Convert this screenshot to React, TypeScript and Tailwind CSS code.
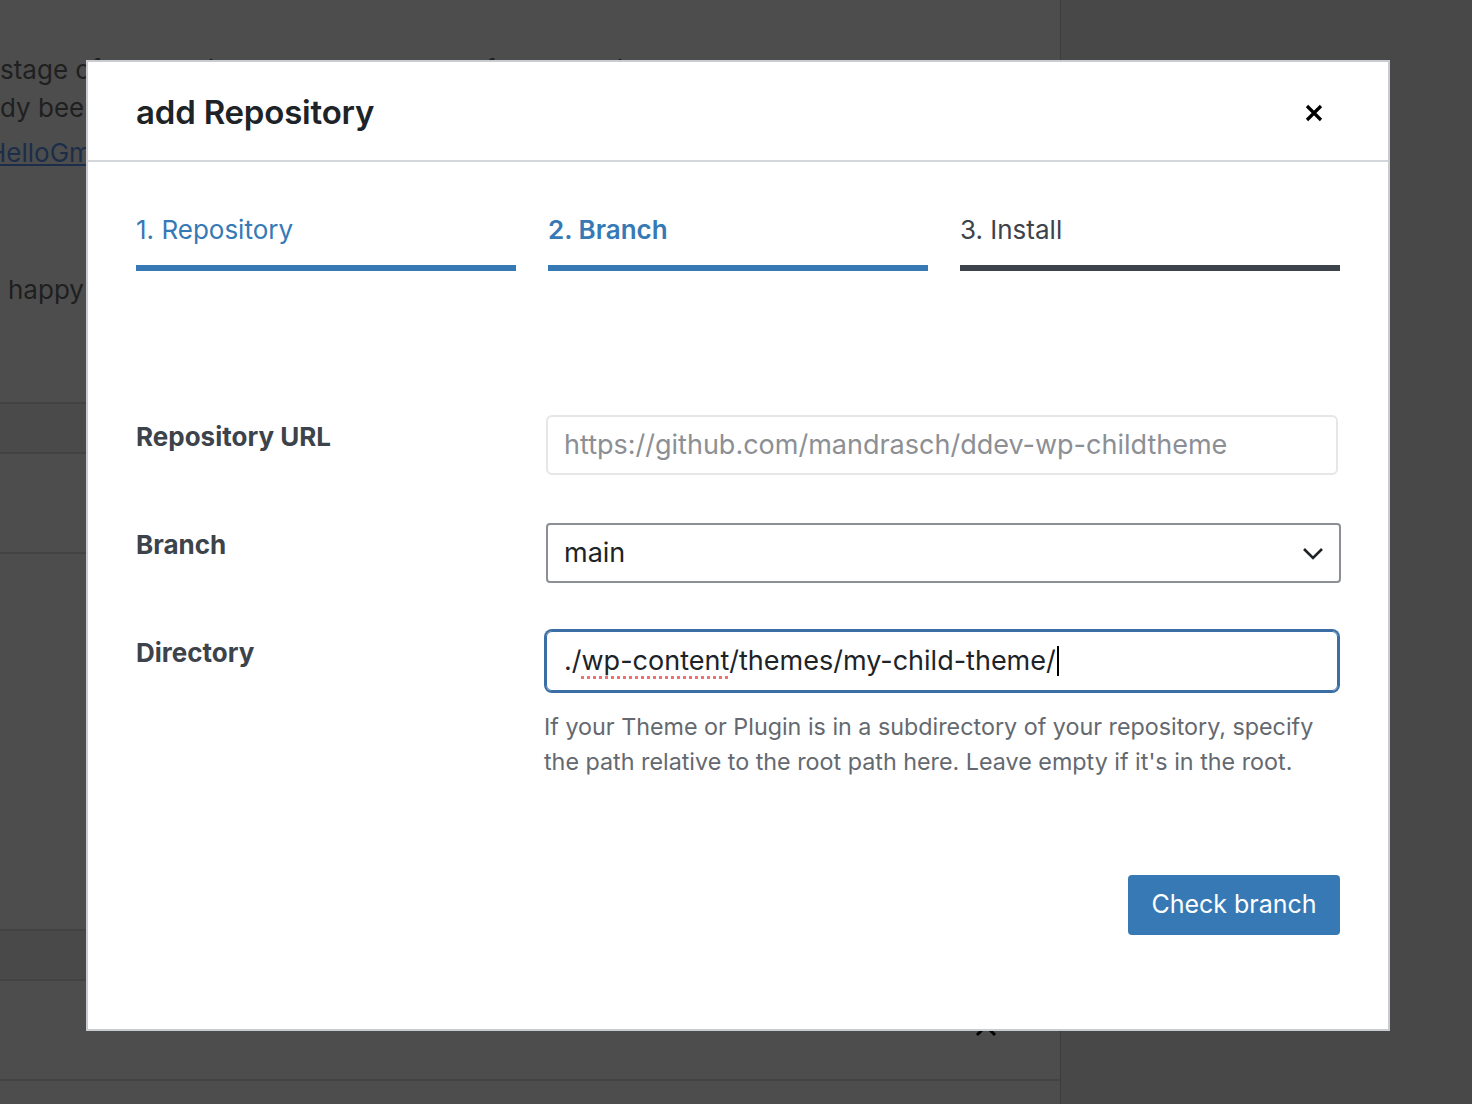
import React from "react";

const font = "font-['Inter','Noto_Sans',sans-serif]";

function Backdrop() {
  return (
    <div className="flex h-full w-full">
      {/* ── Admin page behind the overlay ── */}
      <div className="flex w-[1060px] flex-col bg-[#4d4d4d] text-[26px] leading-[38px] text-[#1f1f1f]">
        <div className="h-[404px] border-b-2 border-[#434343] pt-[51px]">
          <p className="whitespace-nowrap">
            stage of the plugin development, some features might not work as expected or have changed.
          </p>
          <p className="whitespace-nowrap">dy been installed on this site and can be updated from the repository.</p>
          <p className="mt-[7px] whitespace-nowrap">
            <a className="-ml-[13px] text-[#1c2d4a] underline underline-offset-2">HelloGmbH</a>
          </p>
          <p className="mt-[99px] pl-[8px]">happy</p>
        </div>
        <div className="h-[50px] border-b-2 border-[#434343] bg-[#4a4a4a]" />
        <div className="h-[100px] border-b-2 border-[#434343]" />
        <div className="h-[377px] border-b-2 border-[#434343]" />
        <div className="h-[50px] border-b-2 border-[#434343] bg-[#494949]" />
        <div className="h-[100px] border-b-2 border-[#434343] pl-[975px] pt-[42px]">
          <svg width="22" height="14" viewBox="0 0 22 14" fill="none">
            <path d="M2 12 L11 3 L20 12" stroke="#000" strokeWidth="3" />
          </svg>
        </div>
        <div className="flex-1" />
      </div>
      <div className="flex-1 border-l border-[#3c3c3c] bg-[#484848]" />
    </div>
  );
}

function Step({ label, active, current }: { label: string; active: boolean; current?: boolean }) {
  return (
    <div className="flex flex-col">
      <span
        className={`text-[26px] leading-[30px] ${active ? "text-[#3679b5]" : "text-[#3c434a]"} ${
          current ? "font-semibold" : "font-normal"
        }`}
      >
        {label}
      </span>
      <div className={`mt-[20px] h-[6px] ${active ? "bg-[#3679b5]" : "bg-[#3c434a]"}`} />
    </div>
  );
}

export default function App() {
  return (
    <div className={`relative h-[1104px] w-[1472px] overflow-hidden ${font}`}>
      <Backdrop />

      {/* ── Modal ── */}
      <div className="absolute left-[86px] top-[60px] flex h-[971px] w-[1304px] flex-col border-2 border-[#c8cbcf] bg-white">
        {/* Header */}
        <div className="flex h-[100px] items-center justify-between border-b-2 border-[#d3d7db] pl-[48px] pr-[65px] pt-[3px]">
          <h1 className="text-[33px] font-semibold tracking-[-0.2px] text-[#1d2327]">add Repository</h1>
          <button className="flex h-[18px] w-[18px] items-center justify-center">
            <svg width="18" height="18" viewBox="0 0 18 18" fill="none">
              <path d="M2 2 L16 16 M16 2 L2 16" stroke="#000" strokeWidth="3.2" />
            </svg>
          </button>
        </div>

        <div className="px-[48px]">
          {/* Steps */}
          <div className="grid grid-cols-3 gap-[32px] pt-[53px]">
            <Step label="1. Repository" active />
            <Step label="2. Branch" active current />
            <Step label="3. Install" active={false} />
          </div>

          {/* Form */}
          <div className="mt-[144px] flex flex-col gap-[48px]">
            <div className="grid grid-cols-[410px_794px]">
              <label className="pt-[6px] text-[26px] font-bold leading-[32px] text-[#3c434a]">Repository URL</label>
              <div className="flex h-[60px] w-[792px] items-center rounded-[6px] border-2 border-[#e4e6e8] px-[16px] text-[27px] text-[#8c8f94]">
                https://github.com/mandrasch/ddev-wp-childtheme
              </div>
            </div>

            <div className="grid grid-cols-[410px_794px]">
              <label className="pt-[6px] text-[26px] font-bold leading-[32px] text-[#3c434a]">Branch</label>
              <div className="flex h-[60px] w-[795px] items-center justify-between rounded-[4px] border-2 border-[#8c8f94] pl-[16px] pr-[15px] text-[27px] text-[#1d2327]">
                <span>main</span>
                <svg width="22" height="13" viewBox="0 0 22 13" fill="none">
                  <path d="M2 2 L11 11 L20 2" stroke="#1d2327" strokeWidth="2.6" />
                </svg>
              </div>
            </div>

            <div className="grid grid-cols-[410px_794px]">
              <label className="pt-[6px] text-[26px] font-bold leading-[32px] text-[#3c434a]">Directory</label>
              <div>
                <div className="flex h-[60px] w-[792px] items-center rounded-[6px] border border-[#3a6ea5] px-[17px] text-[27px] text-[#1d2327] shadow-[0_0_0_2px_#3a6ea5]">
                  <span>./</span>
                  <span className="underline decoration-[#f07070] decoration-dotted decoration-[3px] underline-offset-[6px]">
                    wp-content
                  </span>
                  <span>/themes/my-child-theme/</span>
                  <span className="ml-[1px] inline-block h-[30px] w-[2px] bg-black" />
                </div>
                <p className="mt-[18px] -ml-[2px] text-[23.3px] leading-[35px] text-[#646970]">
                  If your Theme or Plugin is in a subdirectory of your repository, specify
                  <br />
                  the path relative to the root path here. Leave empty if it's in the root.
                </p>
              </div>
            </div>
          </div>

          {/* Action */}
          <div className="mt-[96px] flex justify-end">
            <button className="h-[60px] w-[212px] rounded-[4px] bg-[#3679b5] text-[25px] text-white">Check branch</button>
          </div>
        </div>
      </div>
    </div>
  );
}
